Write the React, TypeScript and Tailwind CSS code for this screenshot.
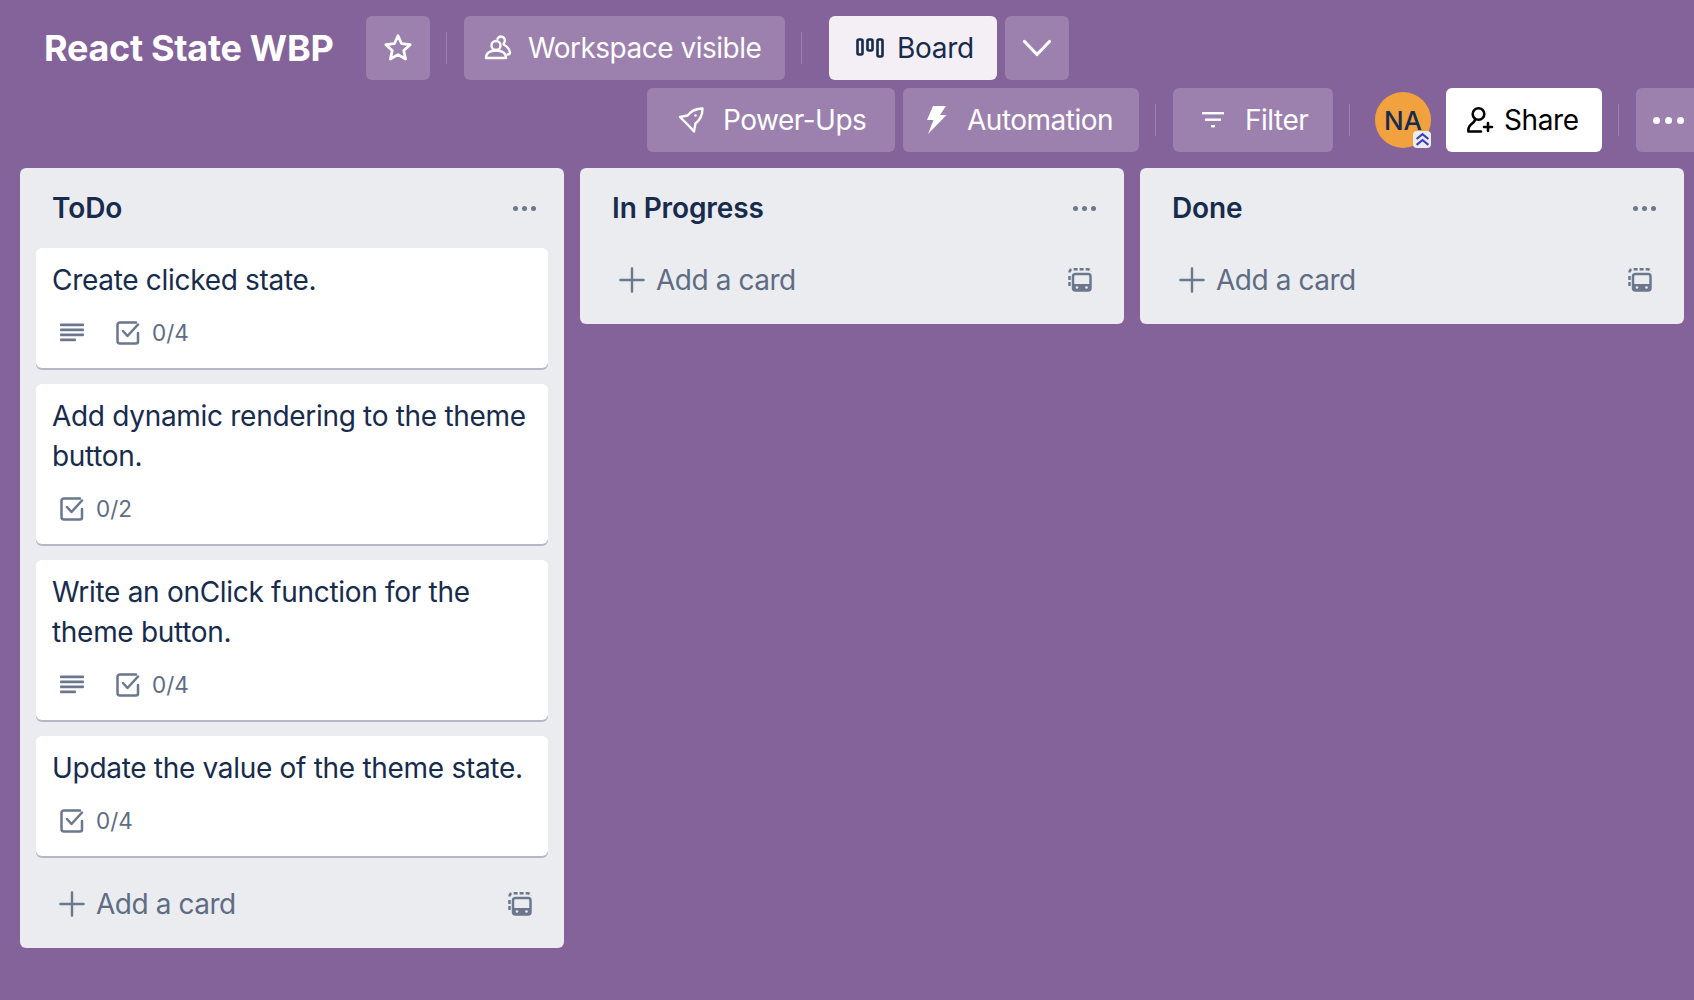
const headerBtn =
  "flex h-16 shrink-0 items-center rounded-md bg-white/20 text-[28px] tracking-[-0.5px] text-white";

function StarIcon() {
  return (
    <svg width="32" height="32" viewBox="0 0 30 30" fill="none" stroke="white" strokeWidth="2.6" strokeLinejoin="round">
      <path d="M15 3.5l3.4 7.5 8 .9-6 5.4 1.7 8-7.100-4.100-7.100 4.100 1.700-8-6-5.400 8-.9z" />
    </svg>
  );
}

function PeopleIcon() {
  return (
    <svg width="28" height="28" viewBox="0 0 28 28" fill="none" stroke="white" strokeWidth="2.4" strokeLinecap="round" strokeLinejoin="round">
      <circle cx="12" cy="11.500" r="4.500" />
      <path d="M2 24c0-4.500 3.500-7.500 10-7.500s10 3 10 7.500z" />
      <path d="M13.500 5c1-2 3-3 5-2.200 2.500 1 3 4 1.500 6.200-.5.800-.5 1.500.3 2 2.700 1.500 5.200 3.500 5.700 7.500 0 1.500-1 2-2.500 2" />
    </svg>
  );
}

function BoardIcon() {
  return (
    <svg width="28" height="20" viewBox="0 0 28 20" fill="none" stroke="#172b4d" strokeWidth="2.600">
      <rect x="1.500" y="1.500" width="5" height="15" rx="1.500" />
      <rect x="11.500" y="1.500" width="5" height="11" rx="1.500" />
      <rect x="21.500" y="1.500" width="5" height="17" rx="1.500" />
    </svg>
  );
}

function ChevronIcon() {
  return (
    <svg width="30" height="18" viewBox="0 0 30 18" fill="none" stroke="white" strokeWidth="3.200" strokeLinecap="round" strokeLinejoin="round">
      <path d="M2.500 2.500L15 15.500 27.500 2.500" />
    </svg>
  );
}

function RocketIcon() {
  return (
    <svg width="28" height="28" viewBox="0 0 28 28" fill="none" stroke="white" strokeWidth="2.400" strokeLinejoin="round">
      <path d="M25.500 2.500C19 2.500 14 5 10.500 9.500L3 11l5 5 4 4 5 5.500 1.500-8C23 14 25.500 9 25.500 2.500z" />
      <circle cx="18.500" cy="9.500" r="1.300" fill="white" stroke="none" />
    </svg>
  );
}

function BoltIcon() {
  return (
    <svg width="22" height="28" viewBox="0 0 22 28" fill="white">
      <path d="M8 0h13l-6 9h6.500L3 28l5.500-14H2z" />
    </svg>
  );
}

function FilterIcon() {
  return (
    <svg width="24" height="18" viewBox="0 0 24 18" fill="white">
      <rect x="1" y="1" width="22" height="2.400" />
      <rect x="4" y="7.500" width="16" height="2.400" />
      <rect x="10" y="14" width="4" height="2.400" />
    </svg>
  );
}

function ShareIcon() {
  return (
    <svg width="28" height="28" viewBox="0 0 28 28" fill="none" stroke="black" strokeWidth="2.600" strokeLinecap="round" strokeLinejoin="round">
      <circle cx="12.500" cy="8" r="5.800" />
      <path d="M9 13c.5 2-1.500 3.500-4 5.500C2.500 20.500 2 24 2.500 25.500H15" />
      <path d="M22 17v8M18 21h8" />
    </svg>
  );
}

function PlusIcon() {
  return (
    <svg width="26" height="26" viewBox="0 0 26 26" fill="none" stroke="#6b778c" strokeWidth="2.400" strokeLinecap="round">
      <path d="M13 1.500v23M1.500 13h23" />
    </svg>
  );
}

function Separator() {
  return <div className="h-8 w-px shrink-0 bg-white/20" />;
}

function ListDots() {
  return (
    <div className="flex items-center gap-[4px] text-[#6b778c]">
      <span className="h-[5px] w-[5px] rounded-full bg-current" />
      <span className="h-[5px] w-[5px] rounded-full bg-current" />
      <span className="h-[5px] w-[5px] rounded-full bg-current" />
    </div>
  );
}

function HeaderDots() {
  return (
    <div className="flex items-center gap-[5px] text-white">
      <span className="h-[7px] w-[7px] rounded-full bg-current" />
      <span className="h-[7px] w-[7px] rounded-full bg-current" />
      <span className="h-[7px] w-[7px] rounded-full bg-current" />
    </div>
  );
}

function DescriptionIcon() {
  return (
    <svg width="24" height="20" viewBox="0 0 24 20" fill="#6b778c">
      <rect x="0" y="0.500" width="24" height="2.700" rx="1" />
      <rect x="0" y="5.500" width="24" height="2.700" rx="1" />
      <rect x="0" y="10.500" width="24" height="2.700" rx="1" />
      <rect x="0" y="15.500" width="16" height="2.700" rx="1" />
    </svg>
  );
}

function ChecklistIcon() {
  return (
    <svg width="24" height="24" viewBox="0 0 24 24" fill="none" stroke="#6b778c" strokeWidth="2.500" strokeLinecap="round" strokeLinejoin="round">
      <path d="M20 1.500H4A2.500 2.500 0 0 0 1.500 4v16A2.500 2.500 0 0 0 4 22.500h16a2 2 0 0 0 2-2V12" />
      <path d="M7 10l4.500 5L22 3.500" />
    </svg>
  );
}

function TemplateIcon() {
  return (
    <svg width="24" height="24" viewBox="0 0 24 24" fill="none" stroke="#6b778c" strokeWidth="2.500">
      <path d="M1.500 4.500c0-2 1-3.200 3-3.200h15c2 0 3 1 3 2.500" strokeDasharray="4 2" />
      <path d="M1.500 8v11" strokeDasharray="4 2" />
      <rect x="5" y="6" width="17.500" height="16.500" rx="2.500" />
      <path d="M5 16h17.500v4.500a2 2 0 0 1-2 2H7a2 2 0 0 1-2-2z" fill="#6b778c" stroke="none" />
      <circle cx="9" cy="19.500" r="1.300" fill="#ebecf0" stroke="none" />
      <circle cx="18.500" cy="19.500" r="1.300" fill="#ebecf0" stroke="none" />
    </svg>
  );
}

function Card({
  title,
  description,
  checklist,
}: {
  title: string;
  description?: boolean;
  checklist: string;
}) {
  return (
    <div className="rounded-md bg-white px-4 pt-3 pb-[15px] shadow-[0_2px_0_#091e4240]">
      <div className="text-[28px] leading-10 tracking-[-0.3px] text-[#172b4d]">{title}</div>
      <div className="mt-[13px] flex h-10 items-center text-[22.5px] text-[#5e6c84]">
        {description && (
          <div className="mr-8 ml-2 flex">
            <DescriptionIcon />
          </div>
        )}
        <div className={description ? "" : "ml-2"}>
          <ChecklistIcon />
        </div>
        <span className="ml-3">{checklist}</span>
      </div>
    </div>
  );
}

function BoardList({ title, children }: { title: string; children?: React.ReactNode }) {
  return (
    <div className="w-[544px] shrink-0 self-start rounded-md bg-[#ebecf0] px-4 pb-3">
      <div className="flex h-20 items-center justify-between pr-3 pl-4">
        <h2 className="text-[28px] font-semibold tracking-[-0.1px] text-[#172b4d]">{title}</h2>
        <ListDots />
      </div>
      {children && <div className="mb-4 flex flex-col gap-4">{children}</div>}
      <div className="flex h-16 items-center pr-4 pl-[23px] text-[28px] tracking-[-0.45px] text-[#5e6c84]">
        <PlusIcon />
        <span className="ml-[11px] flex-1">Add a card</span>
        <TemplateIcon />
      </div>
    </div>
  );
}

export default function App() {
  return (
    <div
      className="h-[1000px] w-[1694px] overflow-hidden bg-[#84629a]"
      style={{ fontFamily: "Inter, 'Liberation Sans', sans-serif" }}
    >
      <header className="pt-4">
        <div className="flex items-center pl-11">
          <h1 className="w-[322px] shrink-0 text-[36px] font-bold tracking-[-0.3px] text-white">React State WBP</h1>
          <button className={`${headerBtn} w-16 justify-center`}>
            <StarIcon />
          </button>
          <div className="mr-[17px] ml-4 flex">
            <Separator />
          </div>
          <button className={`${headerBtn} w-[321px] pl-5`}>
            <PeopleIcon />
            <span className="ml-4">Workspace visible</span>
          </button>
          <div className="mr-[27px] ml-4 flex">
            <Separator />
          </div>
          <button className="flex h-16 w-[168px] shrink-0 items-center rounded-md bg-white/90 pl-[27px] text-[28px] tracking-[-0.3px] text-[#172b4d]">
            <BoardIcon />
            <span className="ml-[13px]">Board</span>
          </button>
          <button className={`${headerBtn} ml-2 w-16 justify-center`}>
            <ChevronIcon />
          </button>
        </div>
        <div className="mt-2 flex items-center pl-[647px]">
          <button className={`${headerBtn} w-[248px] pl-[30px]`}>
            <RocketIcon />
            <span className="ml-[18px]">Power-Ups</span>
          </button>
          <button className={`${headerBtn} ml-2 w-[236px] pl-[22px]`}>
            <BoltIcon />
            <span className="ml-[20px]">Automation</span>
          </button>
          <div className="mr-[17px] ml-4 flex">
            <Separator />
          </div>
          <button className={`${headerBtn} w-[160px] pl-7`}>
            <FilterIcon />
            <span className="ml-[20px]">Filter</span>
          </button>
          <div className="ml-4 flex">
            <Separator />
          </div>
          <div className="relative ml-[25px] flex h-14 w-14 shrink-0 items-center justify-center rounded-full bg-[#f2a13f] text-[26px] font-medium text-[#172b4d]">
            NA
            <div className="absolute right-0 bottom-0 flex h-[17px] w-[18px] items-center justify-center rounded-[4px] bg-[#ebecf0]">
              <svg width="15" height="15" viewBox="0 0 14 14" fill="none" stroke="#3b3fb5" strokeWidth="2">
                <path d="M1.500 6.500L7 2l5.500 4.500M1.500 12L7 7.500l5.500 4.500" />
              </svg>
            </div>
          </div>
          <button className="ml-[15px] flex h-16 w-[156px] shrink-0 items-center rounded-md bg-white pl-5 text-[28px] tracking-[-0.4px] text-black">
            <ShareIcon />
            <span className="ml-[10px]">Share</span>
          </button>
          <div className="mr-[17px] ml-4 flex">
            <Separator />
          </div>
          <button className={`${headerBtn} w-16 justify-center`}>
            <HeaderDots />
          </button>
        </div>
      </header>

      <main className="mt-4 flex gap-4 pl-5">
        <BoardList title="ToDo">
          <Card title="Create clicked state." description checklist="0/4" />
          <Card title="Add dynamic rendering to the theme button." checklist="0/2" />
          <Card title="Write an onClick function for the theme button." description checklist="0/4" />
          <Card title="Update the value of the theme state." checklist="0/4" />
        </BoardList>
        <BoardList title="In Progress" />
        <BoardList title="Done" />
      </main>
    </div>
  );
}
